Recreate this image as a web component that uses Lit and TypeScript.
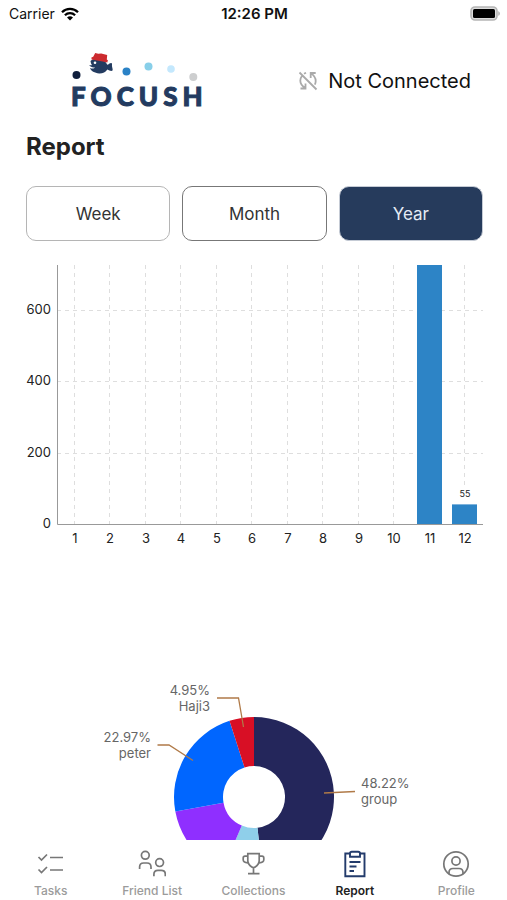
import { LitElement, html, svg, css } from "lit";
import { customElement, state } from "lit/decorators.js";
import { classMap } from "lit/directives/class-map.js";

type Slice = { name: string; percent: number; color: string };

const SLICES: Slice[] = [
  { name: "group", percent: 48.22, color: "#24265b" },
  { name: "", percent: 8.22, color: "#8fcfea" },
  { name: "", percent: 15.64, color: "#8f2fff" },
  { name: "peter", percent: 22.97, color: "#0066ff" },
  { name: "Haji3", percent: 4.95, color: "#d80f25" },
];

const MONTHS = [0, 0, 0, 0, 0, 0, 0, 0, 0, 0, 890, 55];

@customElement("status-bar")
class StatusBar extends LitElement {
  static styles = css`
    :host {
      display: grid;
      grid-template-columns: 1fr auto 1fr;
      align-items: center;
      height: 27px;
      padding: 0 7px 0 9px;
      font-size: 14px;
      color: #111;
    }
    .carrier {
      display: flex;
      align-items: center;
      gap: 6px;
    }
    .time {
      font-size: 15px;
      font-weight: 600;
    }
    .battery {
      justify-self: end;
    }
    svg {
      display: block;
    }
  `;

  render() {
    return html`
      <span class="carrier">
        Carrier
        <svg width="18" height="14" viewBox="0 0 18 14" fill="none" stroke="#000" stroke-width="2.3">
          <path d="M1 5.2a11.4 11.4 0 0 1 16 0" />
          <path d="M3.9 8.2a7.3 7.3 0 0 1 10.2 0" />
          <path d="M9 13.6 6 10.6a4.3 4.3 0 0 1 6 0Z" fill="#000" stroke="none" />
        </svg>
      </span>
      <span class="time">12:26 PM</span>
      <svg class="battery" width="30" height="15" viewBox="0 0 30 15">
        <rect x="1" y="1" width="26" height="13" rx="4" fill="#ddd" stroke="#b5b5b5" stroke-width="1.6" />
        <rect x="3" y="3" width="22" height="9" rx="1.5" fill="#000" />
        <path d="M28.3 5.2c2 .6 2 4 0 4.6Z" fill="#aaa" />
      </svg>
    `;
  }
}

@customElement("brand-logo")
class BrandLogo extends LitElement {
  static styles = css`
    :host {
      display: block;
      width: 136px;
    }
    svg {
      display: block;
    }
    .word {
      font: 900 26px/28px Lato, sans-serif;
      letter-spacing: 5px;
      color: #233b60;
      -webkit-text-stroke: 1px #233b60;
      white-space: nowrap;
    }
  `;

  render() {
    return html`
      <svg width="134" height="30" viewBox="0 0 134 30">
        <circle cx="5.500" cy="23" r="4" fill="#101f3d" />
        <circle cx="55.500" cy="19.500" r="4" fill="#2a82c6" />
        <circle cx="77.500" cy="14.500" r="4" fill="#88cfe9" />
        <circle cx="100" cy="17" r="3.800" fill="#c4e8fd" />
        <circle cx="122.300" cy="25" r="4" fill="#cdcecf" />
        <path
          d="M19.500 9c2-2 5.800-2.600 9-1.900 4 .8 6.500 2.800 7.800 5.600 1.500-.3 2.200-2 4.200-1.800 1 .5.200 2.600.6 3.900.3 1.500 1 3.100.2 4-1.700.5-3.200-.6-5-1.300-1.600 2.600-4.600 4-8.100 3.900-4.400-.1-8.500-2.500-9.200-5.300 1.900.9 4.500.6 5.100-.8-1.800.8-4.800-.1-6-2.200 1.100.4 2.300.3 2.900-.1-.9-.7-1.200-2.400-1.500-4Z"
          fill="#233b60"
        />
        <circle cx="24" cy="10.800" r="1.300" fill="#fff" />
        <path d="m24.200.9 3 .8 3-.2 6 1.400-.4 4.500 1.100.8-.6 2.200-4.700-.8-11-2.200-.2-2 1.800-.6Z" fill="#cc2b2f" />
      </svg>
      <div class="word">FOCUSH</div>
    `;
  }
}

@customElement("bar-chart")
class BarChart extends LitElement {
  static styles = css`
    :host,
    svg {
      display: block;
      width: 100%;
    }
    text {
      font-size: 13px;
      fill: #222;
    }
    .value {
      font-size: 9px;
    }
    .grid {
      stroke: #dedede;
      stroke-dasharray: 4 4;
    }
    .axis {
      stroke: #999;
    }
    .bar {
      fill: #2d84c6;
    }
  `;

  render() {
    const left = 31;
    const right = 457;
    const top = 10;
    const base = 269;
    const step = (right - left) / MONTHS.length;
    const scale = 71.3 / 200;
    const center = (i: number) => left + step * (i + 0.5);
    return html`
      <svg viewBox="0 0 457 290" role="img" aria-label="Minutes per month">
        ${[0, 200, 400, 600].map((v) => {
          const y = Math.round(base - v * scale);
          return svg`
            ${v ? svg`<line class="grid" x1=${left} x2=${right} y1=${y + 0.5} y2=${y + 0.5} />` : null}
            <text x="25" y=${y + 4} text-anchor="end">${v}</text>`;
        })}
        ${MONTHS.map((v, i) => {
          const x = Math.round(center(i));
          const y = Math.max(top, base - v * scale);
          return svg`
            <line class="grid" x1=${x - 0.5} x2=${x - 0.5} y1=${top} y2=${base} />
            ${v ? svg`<rect class="bar" x=${x - 13} y=${y} width="25" height=${base - y} />` : null}
            ${v && y > top
              ? svg`<rect x=${x - 8} y=${y - 16} width="16" height="15" fill="#fff" />
                    <text class="value" x=${x} y=${y - 7} text-anchor="middle">${v}</text>`
              : null}
            <text x=${x} y="288" text-anchor="middle">${i + 1}</text>`;
        })}
        <path class="axis" d="M31.500 10V269.500H457" fill="none" />
      </svg>
    `;
  }
}

@customElement("share-chart")
class ShareChart extends LitElement {
  static styles = css`
    :host,
    svg {
      display: block;
      width: 100%;
    }
    text {
      font-size: 13px;
      fill: #666;
    }
    .leader {
      fill: none;
      stroke: #b07a48;
      stroke-width: 1.3;
    }
  `;

  private arc(start: number, end: number) {
    const point = (radius: number, turn: number) => {
      const a = turn * 2 * Math.PI;
      return `${(228 + radius * Math.sin(a)).toFixed(2)} ${(137 - radius * Math.cos(a)).toFixed(2)}`;
    };
    return `M${point(80, start)}A80 80 0 0 1 ${point(80, end)}L${point(31, end)}A31 31 0 0 0 ${point(31, start)}Z`;
  }

  private label(x: number, y: number, anchor: string, slice: Slice) {
    return svg`<text text-anchor=${anchor}>
      <tspan x=${x} y=${y}>${slice.percent}%</tspan><tspan x=${x} y=${y + 16}>${slice.name}</tspan>
    </text>`;
  }

  render() {
    let turn = 0;
    return html`
      <svg viewBox="0 0 457 260" role="img" aria-label="Share per list">
        ${SLICES.map((s) => {
          const start = turn;
          turn += s.percent / 100;
          return svg`<path d=${this.arc(start, turn)} fill=${s.color} />`;
        })}
        <path class="leader" d="M298 133 329 131.500" />
        <path class="leader" d="M131.500 85H143L167 100.500" />
        <path class="leader" d="M191 38H212.500L217.500 67" />
        ${this.label(335, 128, "start", SLICES[0])}
        ${this.label(125, 82, "end", SLICES[3])}
        ${this.label(184, 35, "end", SLICES[4])}
      </svg>
    `;
  }
}

const ICONS: Record<string, unknown> = {
  Tasks: svg`<path d="m1.500 7 3 3L10 4.500M13 7.500h13M1.500 19.500l3 3L10 17M13 20h13" />`,
  "Friend List": svg`
    <circle cx="7.300" cy="5.300" r="3.900" /><path d="M1.600 19v-2q0-4 4-4h3.400q4 0 4 4v2" />
    <circle cx="21.600" cy="12.600" r="3.900" /><path d="M15.900 26.300v-2q0-4 4-4h3.400q4 0 4 4v2" />`,
  Collections: svg`
    <path d="M8.800 3.700h11.400v6.800c0 3.500-1.800 5-4 6.500-1.200.8-2.200.8-3.400 0-2.200-1.500-4-3-4-6.500ZM14.500 17.500v5.800M9 23.700h11.500M8.800 6.200H6q-1.800 0-1.800 1.800v1.800q0 2.800 4.600 3M20.200 6.200H23q1.800 0 1.800 1.800v1.800q0 2.800-4.600 3" />`,
  Report: svg`
    <path d="M9 3.500H4.300v22.700h19.200V3.500h-4.700" />
    <path d="M9 6.800V3.600q0-1.800 1.800-1.800h6.400q1.800 0 1.800 1.800v3.200Z" />
    <path d="M8.500 12h11M8.500 16.500h7M8.500 21h4.500" />`,
  Profile: svg`
    <circle cx="14" cy="14" r="12.200" /><circle cx="14" cy="11" r="4.100" />
    <path d="M7 24v-1.500q0-4 4-4h6q4 0 4 4V24" />`,
};

@customElement("tab-bar")
class TabBar extends LitElement {
  static styles = css`
    :host {
      display: block;
      background: #fff;
    }
    nav {
      display: grid;
      grid-template-columns: repeat(5, 1fr);
      height: 60px;
    }
    a {
      display: flex;
      flex-direction: column;
      align-items: center;
      gap: 5px;
      padding-top: 10px;
      font-size: 12px;
      line-height: 16px;
      font-weight: 500;
      color: #9b9b9b;
      text-decoration: none;
    }
    svg {
      fill: none;
      stroke: #777;
      stroke-width: 1.700;
    }
    .active {
      color: #222;
      font-weight: 600;
    }
    .active svg {
      stroke: #233b6b;
      stroke-width: 1.900;
    }
  `;

  render() {
    return html`<nav>
      ${Object.keys(ICONS).map(
        (name) => html`<a href="#${name}" class=${classMap({ active: name === "Report" })}>
          <svg width="28" height="28" viewBox="0 0 28 28">${ICONS[name]}</svg>
          <span>${name}</span>
        </a>`,
      )}
    </nav>`;
  }
}

@customElement("app-root")
class AppRoot extends LitElement {
  static styles = css`
    :host {
      display: flex;
      flex-direction: column;
      height: 100vh;
      background: #fff;
      font-family: Inter, "Liberation Sans", sans-serif;
      color: #222;
    }
    .page {
      flex: 1;
      min-height: 0;
      overflow: hidden;
      padding: 0 24px 0 26px;
    }
    .header {
      display: flex;
      justify-content: space-between;
      align-items: center;
      padding: 25px 12px 0 45px;
    }
    .connection {
      display: flex;
      align-items: center;
      gap: 10px;
      font-size: 20px;
      color: #111;
    }
    h1 {
      margin: 22px 0 24px;
      font-size: 24px;
      line-height: 30px;
      font-weight: 700;
    }
    .ranges {
      display: grid;
      grid-template-columns: repeat(3, 1fr);
      gap: 12px;
      margin-bottom: 14px;
    }
    .ranges button {
      height: 55px;
      border: 1px solid #b5b5b5;
      border-radius: 10px;
      background: #fff;
      font: 400 17px Inter, sans-serif;
      color: #333;
    }
    .ranges .strong {
      border-color: #777;
    }
    .ranges .selected {
      border-color: #c5cbd5;
      background: #263b5c;
      color: #e4ebf5;
    }
    share-chart {
      margin-top: 115px;
    }
  `;

  @state() private range = "Year";

  render() {
    return html`
      <status-bar></status-bar>
      <main class="page">
        <div class="header">
          <brand-logo></brand-logo>
          <div class="connection">
            <svg width="20" height="20" viewBox="0 0 20 20" fill="none" stroke="#aaa" stroke-width="1.800">
              <path d="M1.500 1.500 18.500 18.500M2.500 17.500h5v-5M7.200 17.200C3.800 14.800 2.300 12.500 2.300 9.800q0-2.600 1.500-4.500M17.700 2h-5v5M13 2.300c3.300 2.400 4.700 4.800 4.700 7.700q0 2-.9 3.700M6 2.800l2-1" />
            </svg>
            <span>Not Connected</span>
          </div>
        </div>
        <h1>Report</h1>
        <div class="ranges">
          ${["Week", "Month", "Year"].map(
            (name) => html`<button
              class=${classMap({ strong: name === "Month", selected: name === this.range })}
              @click=${() => (this.range = name)}
            >
              ${name}
            </button>`,
          )}
        </div>
        <bar-chart></bar-chart>
        <share-chart></share-chart>
      </main>
      <tab-bar></tab-bar>
    `;
  }
}
